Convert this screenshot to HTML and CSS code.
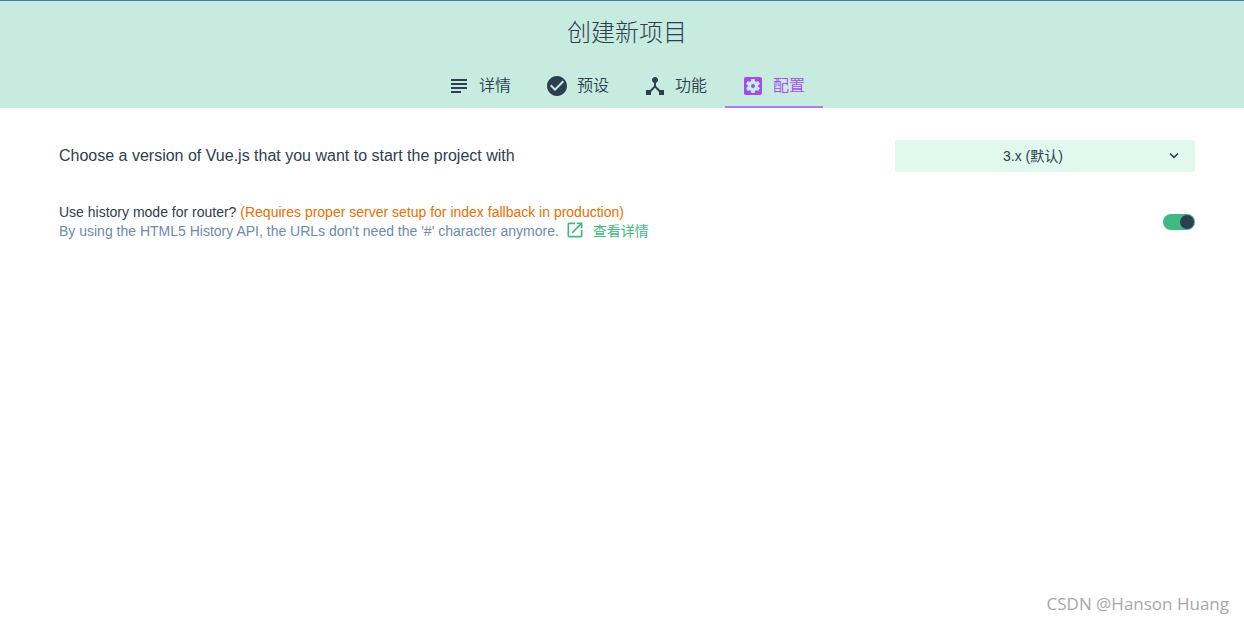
FILE: index.html
```html
<!DOCTYPE html>
<html lang="zh-CN">
<head>
<meta charset="utf-8">
<title>创建新项目</title>
<link rel="stylesheet" href="styles.css">
</head>
<body>
<header class="header">
  <h1 class="title">创建新项目</h1>
  <nav class="tabs">
    <button class="tab" type="button">
      <svg class="icon" viewBox="0 0 24 24" aria-hidden="true"><path d="M4 5h16v2H4zM4 9h16v2H4zM4 13h16v2H4zM4 17h10v2H4z"/></svg>
      <span>详情</span>
    </button>
    <button class="tab" type="button">
      <svg class="icon" viewBox="0 0 24 24" aria-hidden="true"><path d="M12 2C6.48 2 2 6.48 2 12s4.48 10 10 10 10-4.48 10-10S17.52 2 12 2zm-2 15l-5-5 1.41-1.41L10 14.17l7.59-7.59L19 8l-9 9z"/></svg>
      <span>预设</span>
    </button>
    <button class="tab" type="button">
      <svg class="icon" viewBox="0 0 24 24" aria-hidden="true"><path d="M17 16l-4-4V8.82C14.16 8.4 15 7.3 15 6c0-1.66-1.34-3-3-3S9 4.34 9 6c0 1.3.84 2.4 2 2.82V12l-4 4H3v5h5v-3.05l4-4.2 4 4.2V21h5v-5h-4z"/></svg>
      <span>功能</span>
    </button>
    <button class="tab tab-active" type="button" aria-current="page">
      <svg class="icon" viewBox="0 0 24 24" aria-hidden="true"><path d="M12 10c-1.1 0-2 .9-2 2s.9 2 2 2 2-.9 2-2-.9-2-2-2zm7-7H5c-1.11 0-2 .9-2 2v14c0 1.1.89 2 2 2h14c1.11 0 2-.9 2-2V5c0-1.1-.89-2-2-2zm-1.75 9c0 .23-.02.46-.05.68l1.48 1.16c.13.11.17.3.08.45l-1.4 2.42c-.09.15-.27.21-.43.15l-1.74-.7c-.36.28-.76.51-1.18.69l-.26 1.85c-.03.17-.18.3-.35.3h-2.8c-.17 0-.32-.13-.35-.29l-.26-1.85c-.43-.18-.82-.41-1.18-.69l-1.74.7c-.16.06-.34 0-.43-.15l-1.4-2.42c-.09-.15-.05-.34.08-.45l1.48-1.16c-.03-.23-.05-.46-.05-.69 0-.23.02-.46.05-.68l-1.48-1.16c-.13-.11-.17-.3-.08-.45l1.4-2.42c.09-.15.27-.21.43-.15l1.74.7c.36-.28.76-.51 1.18-.69l.26-1.85c.03-.17.18-.3.35-.3h2.8c.17 0 .32.13.35.29l.26 1.85c.43.18.82.41 1.18.69l1.74-.7c.16-.06.34 0 .43.15l1.4 2.42c.09.15.05.34-.08.45l-1.48 1.16c.03.23.05.46.05.69z"/></svg>
      <span>配置</span>
    </button>
  </nav>
</header>
<main class="content">
  <div class="row">
    <label class="row-title" for="version">Choose a version of Vue.js that you want to start the project with</label>
    <div class="select-wrap">
      <select class="select" id="version">
        <option>3.x (默认)</option>
        <option>2.x</option>
      </select>
      <svg class="chevron" viewBox="0 0 24 24" aria-hidden="true"><path d="M7.41 7.84L12 12.42l4.59-4.58L18 9.25l-6 6-6-6z"/></svg>
    </div>
  </div>
  <div class="row">
    <div class="option-text">
      <label for="history">Use history mode for router? <span class="warning">(Requires proper server setup for index fallback in production)</span></label>
      <div class="description">
        <span>By using the HTML5 History API, the URLs don't need the '#' character anymore.</span>
        <a class="link" href="#more">
          <svg class="link-icon" viewBox="0 0 24 24" aria-hidden="true"><path d="M19 19H5V5h7V3H5c-1.11 0-2 .9-2 2v14c0 1.1.89 2 2 2h14c1.1 0 2-.9 2-2v-7h-2v7zM14 3v2h3.59l-9.83 9.83 1.41 1.41L19 6.41V10h2V3h-7z"/></svg>
          <span>查看详情</span>
        </a>
      </div>
    </div>
    <input class="switch" id="history" type="checkbox" role="switch" checked>
  </div>
</main>
<footer class="watermark">CSDN @Hanson Huang</footer>
</body>
</html>
```
FILE: styles.css
```css
* {
  box-sizing: border-box;
}

body {
  margin: 0;
  min-height: 100vh;
  display: flex;
  flex-direction: column;
  background: #fff;
  color: #2c3e50;
  font-family: "Liberation Sans", "Noto Sans CJK SC", sans-serif;
  font-size: 14px;
  line-height: 19px;
}

button,
select {
  font: inherit;
  color: inherit;
}

.header {
  display: flex;
  flex-direction: column;
  align-items: center;
  padding-left: 10px;
  border-top: 1px solid #4678b4;
  background: #c8ebdf;
}

.title {
  margin: 0;
  padding: 16px 0 15px;
  font-size: 24px;
  line-height: 32px;
  font-weight: 300;
}

.tabs {
  display: flex;
}

.tab {
  display: flex;
  align-items: center;
  gap: 8px;
  height: 44px;
  padding: 4px 18px 2px 16px;
  border: 0;
  border-bottom: 2px solid transparent;
  background: none;
  font-size: 16px;
  line-height: 24px;
  font-weight: 350;
}

.tab-active {
  border-bottom-color: #b07af5;
  color: #a549f5;
}

.icon {
  width: 24px;
  height: 24px;
  fill: currentColor;
}

.content {
  flex: 1;
  display: flex;
  flex-direction: column;
  gap: 31px;
  padding: 32px 49px 32px 59px;
}

.row {
  display: flex;
  align-items: center;
  justify-content: space-between;
  gap: 24px;
}

.row-title {
  padding-bottom: 2px;
  font-size: 16px;
}

.select-wrap {
  position: relative;
  flex: 0 0 300px;
}

.select {
  appearance: none;
  display: block;
  width: 100%;
  height: 32px;
  padding: 0 36px 0 12px;
  border: 0;
  border-radius: 3px;
  background: #e0f8ed;
  text-align-last: center;
}

.chevron {
  position: absolute;
  top: 7px;
  right: 12px;
  width: 18px;
  height: 18px;
  fill: currentColor;
  pointer-events: none;
}

.warning {
  color: #ea6e00;
}

.description {
  display: flex;
  flex-wrap: wrap;
  align-items: center;
  gap: 0 6px;
  color: #6b8bad;
}

.link {
  display: flex;
  align-items: center;
  gap: 8px;
  height: 19px;
  color: #42b983;
  text-decoration: none;
}

.link-icon {
  width: 20px;
  height: 20px;
  margin-bottom: 4px;
  fill: currentColor;
}

.switch {
  appearance: none;
  flex: none;
  width: 32px;
  height: 16px;
  margin: 0;
  padding: 1px;
  display: flex;
  border-radius: 8px;
  background: #42b983;
}

.switch::before {
  content: "";
  width: 14px;
  height: 14px;
  border-radius: 50%;
  background: #2c3e50;
}

.switch:checked {
  justify-content: flex-end;
}

.watermark {
  align-self: flex-end;
  padding: 0 15px 7px;
  color: #a8a8a8;
  font-family: "Open Sans", "Noto Sans", sans-serif;
  font-size: 17px;
  line-height: 24px;
}
```
